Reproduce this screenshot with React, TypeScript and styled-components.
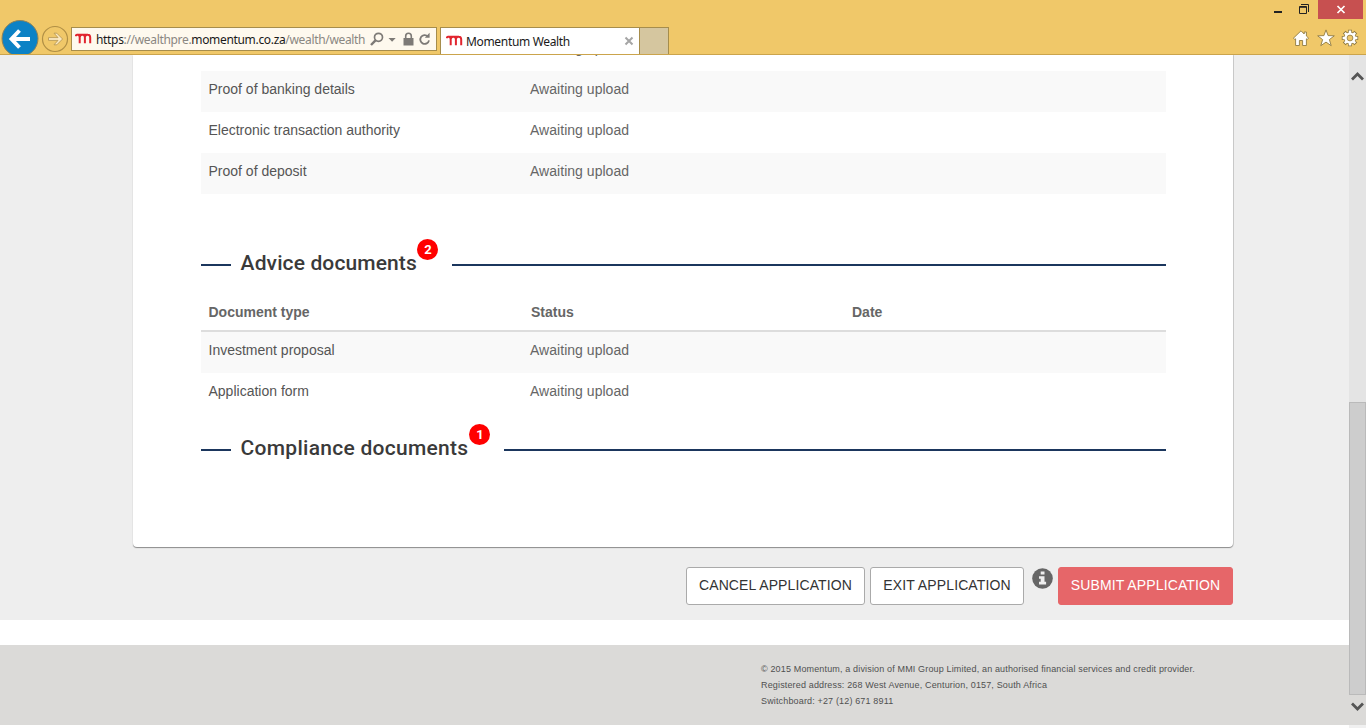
import React from "react";
import styled, { createGlobalStyle } from "styled-components";

const Global = createGlobalStyle`
  * { box-sizing: border-box; }
  html, body { margin: 0; padding: 0; background: #fff; overflow: hidden; }
`;

const Window = styled.div`
  width: 1366px;
  height: 728px;
  display: flex;
  flex-direction: column;
  overflow: hidden;
  background: #fff;
  font-family: "Liberation Sans", Arial, sans-serif;
`;

/* ---------- browser chrome ---------- */

const Chrome = styled.header`
  flex: none;
  height: 55px;
  background: #f0c869;
  border-bottom: 1px solid #cba44c;
  overflow: hidden;
  font-family: "Noto Sans", "Open Sans", sans-serif;
`;

const TitleBar = styled.div`
  height: 19px;
  display: flex;
  justify-content: flex-end;
  padding-right: 3px;
`;

const WindowControl = styled.button<{ $width: number; $danger?: boolean }>`
  width: ${(p) => p.$width}px;
  height: 19px;
  padding: 0;
  border: 0;
  display: flex;
  background: ${(p) => (p.$danger ? "#c75050" : "transparent")};
`;

const Toolbar = styled.div`
  height: 35px;
  display: flex;
  align-items: flex-start;
  padding-left: 1px;
`;

const NavIcon = styled.svg`
  flex: none;
  display: block;
`;

const AddressBar = styled.div`
  width: 366px;
  height: 24px;
  margin: 8px 3px 0 2px;
  padding-left: 3px;
  display: flex;
  align-items: center;
  background: #fef9ee;
  border: 1px solid #a68d4c;
`;

const Url = styled.span`
  width: 274px;
  margin-left: 4px;
  padding-top: 2px;
  font-size: 12px;
  line-height: 22px;
  letter-spacing: -0.33px;
  white-space: nowrap;
  color: #8a8782;
`;

const Strong = styled.span`
  color: #1a1a1a;
`;

const Tab = styled.div`
  width: 200px;
  height: 27px;
  margin-top: 8px;
  padding-left: 5px;
  display: flex;
  align-items: center;
  background: #fff;
  border: 1px solid #a68d4c;
  border-bottom: 0;
`;

const TabTitle = styled.span`
  flex: 1;
  margin-left: 3px;
  padding-top: 2px;
  font-size: 12px;
  line-height: 24px;
  letter-spacing: -0.33px;
  color: #1a1a1a;
  white-space: nowrap;
`;

const NewTab = styled.div`
  width: 29px;
  height: 27px;
  margin-top: 8px;
  background: #d5c69f;
  border: 1px solid #a68d4c;
  border-width: 1px 1px 0 0;
`;

const ToolIcons = styled.div`
  margin-left: auto;
  padding: 10px 7px 0 0;
  display: flex;
  gap: 6.5px;
`;

/* ---------- page ---------- */

const Viewport = styled.div`
  flex: 1;
  min-height: 0;
  display: flex;
`;

const Page = styled.div`
  width: 1349px;
  height: 670px;
  display: flex;
  flex-direction: column;
`;

const Main = styled.main`
  height: 565px;
  background: #eeeeee;
  padding: 0 116px 0 133px;
`;

const Card = styled.section`
  height: 492px;
  padding: 0 67px 0 68px;
  background: #fff;
  border-radius: 0 0 4px 4px;
  box-shadow: 0 1px 1px #8a8a8a, 1px 0 0 #cfcfcf;
`;

const Row = styled.div<{ $striped?: boolean }>`
  flex: none;
  height: 41px;
  padding: 8px 0 0 7.5px;
  display: grid;
  grid-template-columns: 321.5px 321px 1fr;
  font-size: 14px;
  line-height: 20px;
  color: #555;
  background: ${(p) => (p.$striped ? "#f9f9f9" : "#fff")};
`;

const Status = styled.span`
  color: #666;
  letter-spacing: 0.03px;
`;

const ClippedRows = styled.div`
  height: 16px;
  display: flex;
  flex-direction: column;
  justify-content: flex-end;
  overflow: hidden;
`;

const HeadRow = styled.div`
  height: 43px;
  padding: 13px 0 0 7.5px;
  display: grid;
  grid-template-columns: 322.5px 321px 1fr;
  font-size: 14px;
  font-weight: bold;
  line-height: 20px;
  color: #666;
  border-bottom: 2px solid #ddd;
`;

const SectionHeading = styled.h2<{ $top: number }>`
  height: 50px;
  margin: ${(p) => p.$top}px 0 0;
  display: flex;
  align-items: flex-start;
`;

const Rule = styled.span<{ $width?: number }>`
  flex: ${(p) => (p.$width ? "none" : 1)};
  width: ${(p) => (p.$width ? p.$width + "px" : "auto")};
  height: 2px;
  margin-top: 25px;
  background: #1b365d;
`;

const HeadingText = styled.span<{ $width: number; $spacing: number }>`
  width: ${(p) => p.$width}px;
  margin: 12px 0 0 9px;
  padding-left: 0.6px;
  font: 500 21px/24px Roboto, sans-serif;
  letter-spacing: ${(p) => p.$spacing}px;
  white-space: nowrap;
  color: #3a3a3a;
`;

const Badge = styled.span`
  width: 21px;
  height: 21px;
  margin-right: 14px;
  padding-left: 1px;
  border-radius: 50%;
  background: #f00;
  color: #fff;
  font: 700 13px/22px Roboto, sans-serif;
  text-align: center;
`;

const Actions = styled.div`
  height: 58px;
  margin-top: 20px;
  display: flex;
  justify-content: flex-end;
`;

const Button = styled.button<{ $width: number; $primary?: boolean }>`
  width: ${(p) => p.$width}px;
  height: 38px;
  margin-left: 5px;
  padding: 0 0 2px;
  font: 14px/20px "Liberation Sans", Arial, sans-serif;
  letter-spacing: 0.12px;
  white-space: nowrap;
  border-radius: 3px;
  border: 1px solid ${(p) => (p.$primary ? "#e66669" : "#aaa")};
  background: ${(p) => (p.$primary ? "#e66669" : "#fff")};
  color: ${(p) => (p.$primary ? "#fff" : "#333")};
`;

const InfoIcon = styled.svg`
  margin: 1px 0 0 8px;
`;

const Footer = styled.footer`
  height: 80px;
  margin-top: 25px;
  padding: 16px 0 0 761px;
  background: #dbdad8;
  color: #505050;
  font-size: 9px;
  line-height: 16px;
  letter-spacing: 0.155px;
`;

const FooterLine = styled.div`
  white-space: nowrap;
`;

const ScrollBar = styled.div`
  width: 17px;
  height: 673px;
  display: flex;
  flex-direction: column;
  background: linear-gradient(#e4e4e4 565px, #dbdad8 565px, #dbdad8 670px, #f0f0f0 670px);
`;

const ScrollArrow = styled.svg`
  flex: none;
  display: block;
`;

const Thumb = styled.div`
  height: 293px;
  margin-top: 305px;
  background: #cdcdcd;
  border: 1px solid #bababa;
`;

const MomentumMark = () => (
  <svg width="17" height="12" viewBox="0 0 17 12">
    <path
      d="M0.4 3.2C1 1.9 2 1.6 3 1.9C4.5 2.3 4.7 3.4 4.7 4.6V10.3M4.7 3.9C5.2 2.2 6.6 1.6 7.8 1.7C9.4 1.8 9.9 3 9.9 4.4V10.3M9.9 3.9C10.4 2.2 11.6 1.6 12.9 1.7C14.6 1.8 15.2 2.8 15.2 4.4V10.3M2.6 1.7H8M8 1.7H13"
      fill="none"
      stroke="#e1252f"
      strokeWidth="2"
    />
  </svg>
);

const sectionRows = ["Proof of banking details", "Electronic transaction authority", "Proof of deposit"];
const adviceRows = ["Investment proposal", "Application form"];

export default function App() {
  return (
    <Window>
      <Global />
      <Chrome>
        <TitleBar>
          <WindowControl $width={24} aria-label="Minimise">
            <svg width="24" height="19"><path d="M3 11h8v2H3z" fill="#222" /></svg>
          </WindowControl>
          <WindowControl $width={23} aria-label="Restore">
            <svg width="23" height="19">
              <path d="M4.5 6.5h7v7h-7zM4.5 7.3h7M6 4.5h7.5V12" fill="none" stroke="#222" />
            </svg>
          </WindowControl>
          <WindowControl $width={45} $danger aria-label="Close">
            <svg width="45" height="19"><path d="M19.5 6L26.5 13M26.5 6L19.5 13" stroke="#fff" strokeWidth="1.7" /></svg>
          </WindowControl>
        </TitleBar>
        <Toolbar>
          <NavIcon width="39" height="35" viewBox="0 0 39 35">
            <circle cx="19" cy="19.5" r="18" fill="#0c82c5" stroke="#8f8358" strokeWidth="1" />
            <path d="M29 20H11M18.5 11.5L10.5 20L18.5 28.5" fill="none" stroke="#fff" strokeWidth="3.9" />
          </NavIcon>
          <NavIcon width="29" height="35" viewBox="0 0 29 35">
            <circle cx="15" cy="20" r="12.5" fill="none" stroke="#b08f45" strokeWidth="1.2" />
            <path
              d="M8.5 18.6H18L14 14.2H16.8L22.6 20L16.8 25.8H14L18 21.4H8.5Z"
              fill="#fbe9c2"
              stroke="#b99a55"
              strokeWidth="0.9"
            />
          </NavIcon>
          <AddressBar>
            <MomentumMark />
            <Url>
              <Strong>https</Strong>://wealthpre.<Strong>momentum.co.za</Strong>/wealth/wealth
            </Url>
            <svg width="66" height="22" viewBox="0 0 66 22" fill="none" stroke="#7d7a76">
              <circle cx="8.5" cy="9.3" r="4" strokeWidth="1.7" />
              <path d="M5.5 12.3L1 17" strokeWidth="2.4" />
              <path d="M18.5 10h7.2l-3.6 3.8z" fill="#7d7a76" stroke="none" />
              <path d="M33.5 10h10v7.5h-10z" fill="#7d7a76" stroke="none" />
              <path d="M35.7 10.5V8a2.8 2.8 0 0 1 5.6 0v2.5" strokeWidth="1.6" />
              <path d="M57.8 8.4A4.4 4.4 0 1 0 59 12.4" strokeWidth="1.8" />
              <path d="M54.8 9.8h4.8V4.8z" fill="#7d7a76" stroke="none" />
            </svg>
          </AddressBar>
          <Tab>
            <MomentumMark />
            <TabTitle>Momentum Wealth</TabTitle>
            <svg width="19" height="24"><path d="M5.5 8.5L12.5 15.5M12.5 8.5L5.5 15.5" stroke="#a5a5a5" strokeWidth="2" /></svg>
          </Tab>
          <NewTab />
          <ToolIcons>
            <svg width="18" height="18" viewBox="0 0 18 18">
              <path
                d="M9 1.8L1.4 9.2L2.8 10.4L3.6 9.8V16.5H7.4V11.5H10.6V16.5H14.4V9.8L15.2 10.4L16.6 9.2L14.4 7V3H12.2V5Z"
                fill="#fff"
                stroke="#8f7a42"
                strokeWidth="0.9"
              />
            </svg>
            <svg width="18" height="18" viewBox="0 0 18 18">
              <path
                d="M9 .9L11.1 6.6L17.3 6.8L12.4 10.6L14.2 16.7L9 13.1L3.8 16.7L5.6 10.6L.7 6.8L6.9 6.6Z"
                fill="#fff"
                stroke="#8f7a42"
                strokeWidth="0.9"
              />
            </svg>
            <svg width="18" height="18" viewBox="0 0 18 18">
              <g stroke="#8f7a42" strokeWidth="4">
                <path d="M9 .8V17.2M.8 9H17.2M3.2 3.2L14.8 14.8M14.8 3.2L3.2 14.8" />
              </g>
              <circle cx="9" cy="9" r="6.3" fill="#8f7a42" />
              <path d="M9 1.6V16.4M1.6 9H16.4M3.8 3.8L14.2 14.2M14.2 3.8L3.8 14.2" stroke="#fff" strokeWidth="2.5" />
              <circle cx="9" cy="9" r="5.6" fill="#fff" />
              <circle cx="9" cy="9" r="2.9" fill="#f0c869" stroke="#8f7a42" strokeWidth="0.8" />
            </svg>
          </ToolIcons>
        </Toolbar>
      </Chrome>

      <Viewport>
        <Page>
          <Main>
            <Card>
              <ClippedRows>
                <Row>
                  <span />
                  <Status>Awaiting upload</Status>
                </Row>
              </ClippedRows>
              {sectionRows.map((name, i) => (
                <Row key={name} $striped={i % 2 === 0}>
                  <span>{name}</span>
                  <Status>Awaiting upload</Status>
                </Row>
              ))}
              <SectionHeading $top={45}>
                <Rule $width={30} />
                <HeadingText $width={177} $spacing={0.12}>Advice documents</HeadingText>
                <Badge>2</Badge>
                <Rule />
              </SectionHeading>
              <HeadRow>
                <span>Document type</span>
                <span>Status</span>
                <span>Date</span>
              </HeadRow>
              {adviceRows.map((name, i) => (
                <Row key={name} $striped={i % 2 === 0}>
                  <span>{name}</span>
                  <Status>Awaiting upload</Status>
                </Row>
              ))}
              <SectionHeading $top={10}>
                <Rule $width={30} />
                <HeadingText $width={229} $spacing={0.27}>Compliance documents</HeadingText>
                <Badge>1</Badge>
                <Rule />
              </SectionHeading>
            </Card>
            <Actions>
              <Button $width={179}>CANCEL APPLICATION</Button>
              <Button $width={154}>EXIT APPLICATION</Button>
              <InfoIcon width="21" height="21" viewBox="0 0 21 21">
                <circle cx="10.5" cy="10.5" r="10.3" fill="#666" />
                <path d="M8.7 3.5h3.8v3H8.7zM7 8.2h5.5v5.6h1.6v2.6H7v-2.6h1.7v-3H7z" fill="#eee" />
              </InfoIcon>
              <Button $width={175} $primary>SUBMIT APPLICATION</Button>
            </Actions>
          </Main>
          <Footer>
            <FooterLine>© 2015 Momentum, a division of MMI Group Limited, an authorised financial services and credit provider.</FooterLine>
            <FooterLine>Registered address: 268 West Avenue, Centurion, 0157, South Africa</FooterLine>
            <FooterLine>Switchboard: +27 (12) 671 8911</FooterLine>
          </Footer>
        </Page>
        <ScrollBar>
          <ScrollArrow width="17" height="42" viewBox="0 0 17 42">
            <path d="M3 24.5L8.5 19L14 24.5" fill="none" stroke="#555" strokeWidth="2.8" />
          </ScrollArrow>
          <Thumb />
          <ScrollArrow width="17" height="30" viewBox="0 0 17 30">
            <path d="M3 8.5L8.5 14L14 8.5" fill="none" stroke="#555" strokeWidth="2.8" />
          </ScrollArrow>
        </ScrollBar>
      </Viewport>
    </Window>
  );
}
